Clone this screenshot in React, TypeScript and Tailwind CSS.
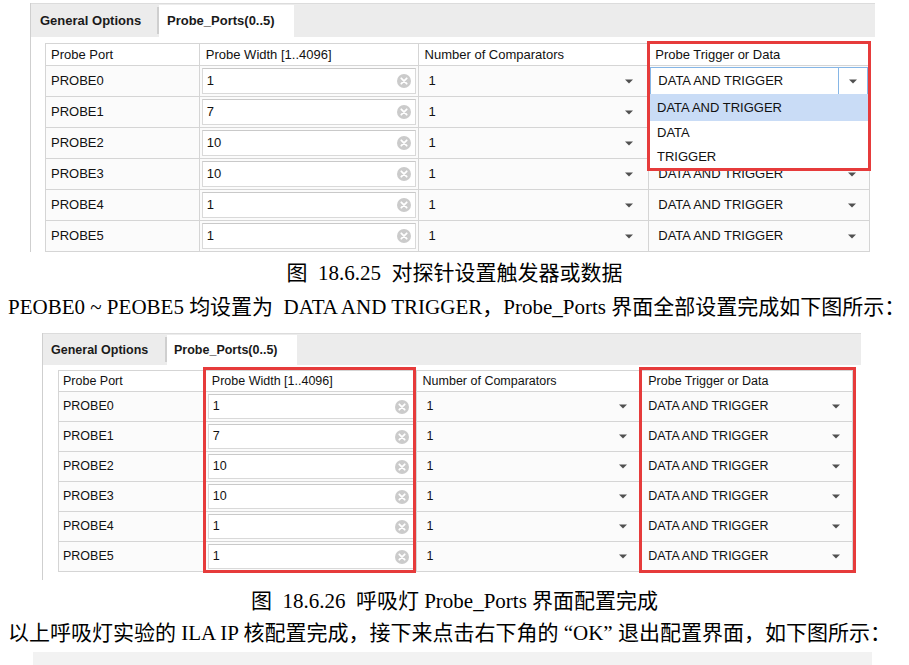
import { ReactElement } from "react";

type TableCfg = {
    cols: string[];
    head: string;
    row: string;
    text: string;
    padFirst: string;
    padNum: string;
    padTrig: string;
};

const cfg1: TableCfg = {
    cols: ["w-[154px]", "w-[219px]", "w-[231px]", "w-[221px]"],
    head: "h-[22px]",
    row: "h-[31px]",
    text: "text-[13px]",
    padFirst: "pl-[5px]",
    padNum: "pl-[10px] pr-[15px]",
    padTrig: "pl-[9px] pr-[13px]",
};

const cfg2: TableCfg = {
    cols: ["w-[147px]", "w-[211px]", "w-[226px]", "w-[211px]"],
    head: "h-[21px]",
    row: "h-[30px]",
    text: "text-[12.5px]",
    padFirst: "pl-[4px]",
    padNum: "pl-[10px] pr-[14px]",
    padTrig: "pl-[6px] pr-[12px]",
};

const probes = [
    { name: "PROBE0", width: "1" },
    { name: "PROBE1", width: "7" },
    { name: "PROBE2", width: "10" },
    { name: "PROBE3", width: "10" },
    { name: "PROBE4", width: "1" },
    { name: "PROBE5", width: "1" },
];

const headers = ["Probe Port", "Probe Width [1..4096]", "Number of Comparators", "Probe Trigger or Data"];

const cell = "border-r border-b border-[#d5d5d5] flex items-center";

const Arrow = (): ReactElement => (
    <svg width="8" height="5" viewBox="0 0 8 5" className="shrink-0">
        <path d="M0 0.5h8L4 4.5z" fill="#505050" />
    </svg>
);

const ClearIcon = (): ReactElement => (
    <svg width="14" height="14" viewBox="0 0 14 14" className="shrink-0">
        <circle cx="7" cy="7" r="7" fill="#cbcbcb" />
        <path d="M4.3 4.3l5.4 5.4M9.7 4.3l-5.4 5.4" stroke="#fff" strokeWidth={1.8} strokeLinecap="round" />
    </svg>
);

const ProbeTable = ({ cfg, combo }: { cfg: TableCfg; combo?: boolean }): ReactElement => (
    <div className={`border-l border-t border-[#d5d5d5] text-[#111] ${cfg.text}`}>
        <div className={`flex ${cfg.head}`}>
            {headers.map((h, i) => (
                <div key={h} className={`${cfg.cols[i]} ${cell} bg-white ${i === 0 ? cfg.padFirst : "pl-[6px]"}`}>
                    {h}
                </div>
            ))}
        </div>
        {probes.map((p, idx) => (
            <div key={p.name} className={`flex ${cfg.row}`}>
                <div className={`${cfg.cols[0]} ${cell} bg-[#fbfbfb] ${cfg.padFirst}`}>{p.name}</div>
                <div className={`${cfg.cols[1]} border-r border-b border-[#d5d5d5] bg-[#fbfbfb] p-[2px]`}>
                    <div className="h-full flex items-center bg-white border border-[#d9d9d9] border-t-[#c9c9c9] pl-[4px] pr-[4px]">
                        <span className="flex-1">{p.width}</span>
                        <ClearIcon />
                    </div>
                </div>
                <div className={`${cfg.cols[2]} ${cell} justify-between bg-[#fbfbfb] ${cfg.padNum}`}>
                    <span>1</span>
                    <Arrow />
                </div>
                {combo && idx === 0 ? (
                    <div className={`${cfg.cols[3]} border-r border-b border-[#d5d5d5] bg-[#fbfbfb] p-px`}>
                        <div className="h-full flex bg-white border border-[#86b6e6]">
                            <div className="flex-1 flex items-center pl-[7px]">DATA AND TRIGGER</div>
                            <div className="w-[29px] border-l border-[#86b6e6] flex items-center justify-center">
                                <Arrow />
                            </div>
                        </div>
                    </div>
                ) : combo && (idx === 1 || idx === 2) ? (
                    // hidden under the open list
                    <div className={`${cfg.cols[3]} ${cell} bg-[#fbfbfb]`} />
                ) : (
                    <div className={`${cfg.cols[3]} ${cell} justify-between bg-[#fbfbfb] ${cfg.padTrig}`}>
                        <span>DATA AND TRIGGER</span>
                        <Arrow />
                    </div>
                )}
            </div>
        ))}
    </div>
);

const App = (): ReactElement => {
    const ui = "font-['Liberation_Sans',Arial,sans-serif]";
    const doc = "font-['Liberation_Serif','Noto_Sans_CJK_SC',serif] text-[21px] text-black whitespace-pre";

    return (
        <div className="w-[909px] h-[665px] bg-white overflow-hidden pt-[3px]">
            {/* first screenshot: dropdown open */}
            <div className={`ml-[30px] w-[845px] h-[249px] border-l border-[#cfcfcf] flex flex-col ${ui}`}>
                <div className="h-[34px] bg-[#ececec] border-t border-[#dcdcdc] flex items-end text-[13px] font-bold text-[#1a1a1a]">
                    <div className="w-[126px] h-[32px] flex items-center pl-[9px]">General Options</div>
                    <div className="w-[2px] h-[27px] self-center bg-[#cfcfcf]" />
                    <div className="w-[135px] h-[32px] bg-white flex items-center pl-[8px]">Probe_Ports(0..5)</div>
                </div>
                <div className="flex-1 bg-white pl-[14px] pt-[6px]">
                    <div className="relative w-[825px]">
                        <ProbeTable cfg={cfg1} combo />
                        <div className="absolute left-[605px] top-[51px] w-[218px] h-[74px] bg-white text-[13px] text-[#111] flex flex-col">
                            <div className="h-[27px] bg-[#c9dcf6] flex items-center pl-[7px]">DATA AND TRIGGER</div>
                            <div className="h-[24px] flex items-center pl-[7px]">DATA</div>
                            <div className="h-[23px] flex items-center pl-[7px]">TRIGGER</div>
                        </div>
                        <div className="absolute left-[602px] top-[-2px] w-[224px] h-[130px] border-[3px] border-[#e63b3b]" />
                    </div>
                </div>
            </div>

            <div className={`mt-[6px] h-[30px] leading-[30px] text-center ${doc}`}>图  18.6.25  对探针设置触发器或数据</div>
            <div className={`mt-[4px] h-[30px] leading-[30px] pl-[8px] ${doc}`}>
                PEOBE0 ~ PEOBE5 均设置为  DATA AND TRIGGER，Probe_Ports 界面全部设置完成如下图所示：
            </div>

            {/* second screenshot: all set */}
            <div className={`mt-[11px] ml-[42px] w-[819px] h-[247px] border-l border-[#cfcfcf] flex flex-col ${ui}`}>
                <div className="h-[32px] bg-[#ececec] border-t border-[#dcdcdc] flex items-end text-[12.5px] font-bold text-[#1a1a1a]">
                    <div className="w-[122px] h-[30px] flex items-center pl-[8px]">General Options</div>
                    <div className="w-[2px] h-[25px] self-center bg-[#cfcfcf]" />
                    <div className="w-[130px] h-[30px] bg-white flex items-center pl-[7px]">Probe_Ports(0..5)</div>
                </div>
                <div className="flex-1 bg-white pl-[15px] pt-[5px]">
                    <div className="relative w-[795px]">
                        <ProbeTable cfg={cfg2} />
                        <div className="absolute left-[145px] top-[-3px] w-[213px] h-[206px] border-[3px] border-[#e63b3b]" />
                        <div className="absolute left-[581px] top-[-3px] w-[217px] h-[206px] border-[3px] border-[#e63b3b]" />
                    </div>
                </div>
            </div>

            <div className={`mt-[6px] h-[30px] leading-[30px] text-center ${doc}`}>图  18.6.26  呼吸灯 Probe_Ports 界面配置完成</div>
            <div className={`mt-[2px] h-[30px] leading-[30px] pl-[8px] ${doc}`}>
                以上呼吸灯实验的 ILA IP 核配置完成，接下来点击右下角的 “OK” 退出配置界面，如下图所示：
            </div>
            <div className="mt-[4px] ml-[33px] w-[839px] h-[13px] bg-[#f2f2f2]" />
        </div>
    );
};

export default App;
